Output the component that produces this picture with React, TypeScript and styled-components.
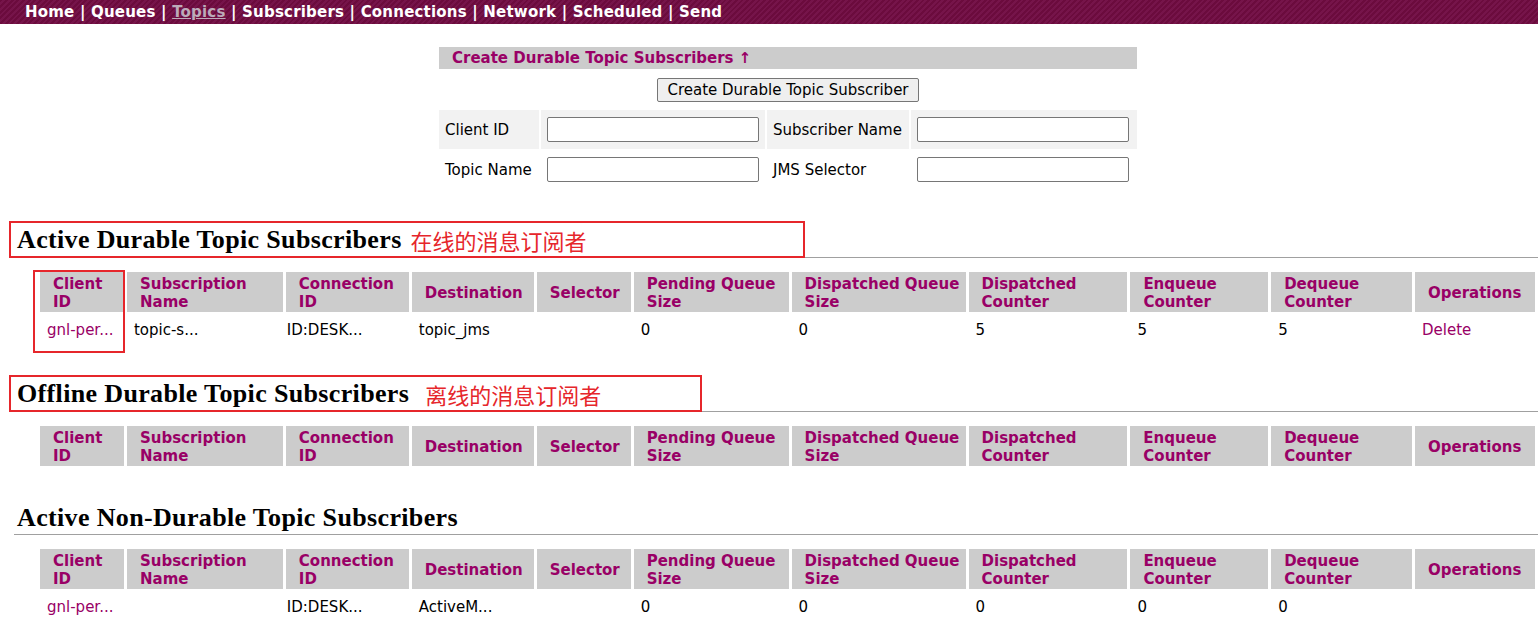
import React from 'react';
import styled, { createGlobalStyle } from 'styled-components';

const GlobalStyle = createGlobalStyle`
  body {
    margin: 0;
    background: #fff;
    font-family: 'DejaVu Sans', 'Noto Sans CJK SC', sans-serif;
    font-size: 15px;
    color: #000;
  }
`;

const pallete = {
  maroon: '#6b0b3d',
  stripe: '#76144a',
  link: '#990066',
  gray: '#cccccc',
  light: '#f2f2f2',
  line: '#a0a0a0',
  red: '#e6262b',
};

const NavBar = styled.div`
  height: 24px;
  padding-left: 25px;
  background: repeating-linear-gradient(
    135deg,
    ${pallete.maroon} 0 2px,
    ${pallete.stripe} 2px 4px
  );
  color: #fff;
  font-weight: bold;
  font-size: 15px;
  letter-spacing: 0.2px;
  line-height: 24px;
  white-space: nowrap;
`;

const NavLink = styled.span<{ active?: boolean }>`
  color: ${props => (props.active ? '#bcaab9' : '#fff')};
  text-decoration: ${props => (props.active ? 'underline' : 'none')};
`;

const FormBox = styled.div`
  width: 698px;
  margin: 23px 0 0 439px;
`;

const FormHeader = styled.div`
  height: 22px;
  line-height: 23px;
  padding-left: 13px;
  background: ${pallete.gray};
  color: ${pallete.link};
  font-weight: bold;
`;

const ButtonRow = styled.div`
  display: flex;
  justify-content: center;
  padding: 9px 0 8px;
`;

const Button = styled.button`
  height: 24px;
  padding: 0 9px;
  font-family: inherit;
  font-size: 15px;
  color: #000;
  background: #efefef;
  border: 1px solid #767676;
  border-radius: 2px;
`;

const FormGrid = styled.div`
  display: grid;
  grid-template-columns: 100px 224px 142px 226px;
  grid-auto-rows: 39px;
  column-gap: 2px;
  row-gap: 1px;
`;

const FormCell = styled.div<{ shaded?: boolean }>`
  display: flex;
  align-items: center;
  padding-left: 6px;
  background: ${props => (props.shaded ? pallete.light : '#fff')};
  white-space: nowrap;
`;

const TextInput = styled.input`
  box-sizing: border-box;
  width: 212px;
  height: 25px;
  border: 1px solid #767676;
  border-radius: 2px;
`;

const SectionHeading = styled.h2<{ top: number }>`
  display: flex;
  align-items: flex-end;
  height: 36px;
  margin: ${props => props.top}px 0 0 14px;
  border-bottom: 1px solid ${pallete.line};
  font-family: 'Liberation Serif', 'DejaVu Serif', serif;
  font-size: 26px;
  font-weight: bold;
`;

const NoteBox = styled.div<{ width: number }>`
  box-sizing: border-box;
  display: flex;
  align-items: center;
  width: ${props => props.width}px;
  height: 37px;
  margin: 0 0 -1px -5px;
  padding-left: 6px;
  border: 2px solid ${pallete.red};
`;

const HeadingText = styled.span<{ plain?: boolean }>`
  line-height: 32px;
  margin-left: ${props => (props.plain ? 3 : 0)}px;
  letter-spacing: 0.35px;
  white-space: nowrap;
`;

const Note = styled.span<{ gap: number }>`
  margin-left: ${props => props.gap}px;
  color: ${pallete.red};
  font-family: 'Noto Sans CJK SC', sans-serif;
  font-weight: normal;
  font-size: 22px;
`;

const TableWrap = styled.div`
  position: relative;
  margin: 14px 0 0 37px;
`;

const Table = styled.table`
  table-layout: fixed;
  border-collapse: separate;
  border-spacing: 3px 0;
`;

const Th = styled.th`
  height: 40px;
  padding: 1px 0 0 13px;
  box-sizing: border-box;
  background: ${pallete.gray};
  color: ${pallete.link};
  font-size: 15px;
  line-height: 18px;
  text-align: left;
  vertical-align: middle;
  white-space: nowrap;
`;

const Td = styled.td<{ link?: boolean; nudge?: number }>`
  height: 34px;
  padding: 0 0 0 ${props => 7 + (props.nudge || 0)}px;
  color: ${props => (props.link ? pallete.link : '#000')};
  white-space: nowrap;
  overflow: visible;
`;

const ColumnMark = styled.div`
  position: absolute;
  left: -4px;
  top: -2px;
  width: 92px;
  height: 83px;
  box-sizing: border-box;
  border: 2px solid ${pallete.red};
  pointer-events: none;
`;

const navItems = [
  'Home',
  'Queues',
  'Topics',
  'Subscribers',
  'Connections',
  'Network',
  'Scheduled',
  'Send',
];

const columns = [
  { title: ['Client', 'ID'], width: 84 },
  { title: ['Subscription', 'Name'], width: 156 },
  { title: ['Connection', 'ID'], width: 123, nudge: -8 },
  { title: ['Destination'], width: 122 },
  { title: ['Selector'], width: 94 },
  { title: ['Pending Queue', 'Size'], width: 155 },
  { title: ['Dispatched Queue', 'Size'], width: 174 },
  { title: ['Dispatched', 'Counter'], width: 159 },
  { title: ['Enqueue', 'Counter'], width: 138 },
  { title: ['Dequeue', 'Counter'], width: 141 },
  { title: ['Operations'], width: 120 },
];

const linkCols = [0, 10];

interface TableProps {
  rows: string[][];
  marked?: boolean;
}

const SubscriberTable: React.FC<TableProps> = ({ rows, marked }) => (
  <TableWrap>
    <Table>
      <colgroup>
        {columns.map((col, idx) => (
          <col key={idx} style={{ width: col.width }} />
        ))}
      </colgroup>
      <thead>
        <tr>
          {columns.map((col, idx) => (
            <Th key={idx}>
              {col.title.map((line, i) => (
                <React.Fragment key={i}>
                  {i > 0 && <br />}
                  {line}
                </React.Fragment>
              ))}
            </Th>
          ))}
        </tr>
      </thead>
      <tbody>
        {rows.map((row, r) => (
          <tr key={r}>
            {row.map((cell, idx) => (
              <Td
                key={idx}
                link={linkCols.includes(idx)}
                nudge={columns[idx].nudge}
              >
                {cell}
              </Td>
            ))}
          </tr>
        ))}
      </tbody>
    </Table>
    {marked && <ColumnMark />}
  </TableWrap>
);

const App: React.FC = () => (
  <>
    <GlobalStyle />
    <NavBar>
      {navItems.map((item, idx) => (
        <React.Fragment key={item}>
          {idx > 0 && ' | '}
          <NavLink active={item === 'Topics'}>{item}</NavLink>
        </React.Fragment>
      ))}
    </NavBar>

    <FormBox>
      <FormHeader>Create Durable Topic Subscribers ↑</FormHeader>
      <ButtonRow>
        <Button type='button'>Create Durable Topic Subscriber</Button>
      </ButtonRow>
      <FormGrid>
        <FormCell shaded>Client ID</FormCell>
        <FormCell shaded>
          <TextInput type='text' />
        </FormCell>
        <FormCell shaded>Subscriber Name</FormCell>
        <FormCell shaded>
          <TextInput type='text' />
        </FormCell>
        <FormCell>Topic Name</FormCell>
        <FormCell>
          <TextInput type='text' />
        </FormCell>
        <FormCell>JMS Selector</FormCell>
        <FormCell>
          <TextInput type='text' />
        </FormCell>
      </FormGrid>
    </FormBox>

    <SectionHeading top={32}>
      <NoteBox width={796}>
        <HeadingText>Active Durable Topic Subscribers</HeadingText>
        <Note gap={9}>在线的消息订阅者</Note>
      </NoteBox>
    </SectionHeading>
    <SubscriberTable
      marked
      rows={[
        ['gnl-per...', 'topic-s...', 'ID:DESK...', 'topic_jms', '', '0', '0', '5', '5', '5', 'Delete'],
      ]}
    />

    <SectionHeading top={27}>
      <NoteBox width={693}>
        <HeadingText>Offline Durable Topic Subscribers</HeadingText>
        <Note gap={16}>离线的消息订阅者</Note>
      </NoteBox>
    </SectionHeading>
    <SubscriberTable rows={[]} />

    <SectionHeading top={32}>
      <HeadingText plain>Active Non-Durable Topic Subscribers</HeadingText>
    </SectionHeading>
    <SubscriberTable
      rows={[
        ['gnl-per...', '', 'ID:DESK...', 'ActiveM...', '', '0', '0', '0', '0', '0', ''],
      ]}
    />
  </>
);

export default App;
